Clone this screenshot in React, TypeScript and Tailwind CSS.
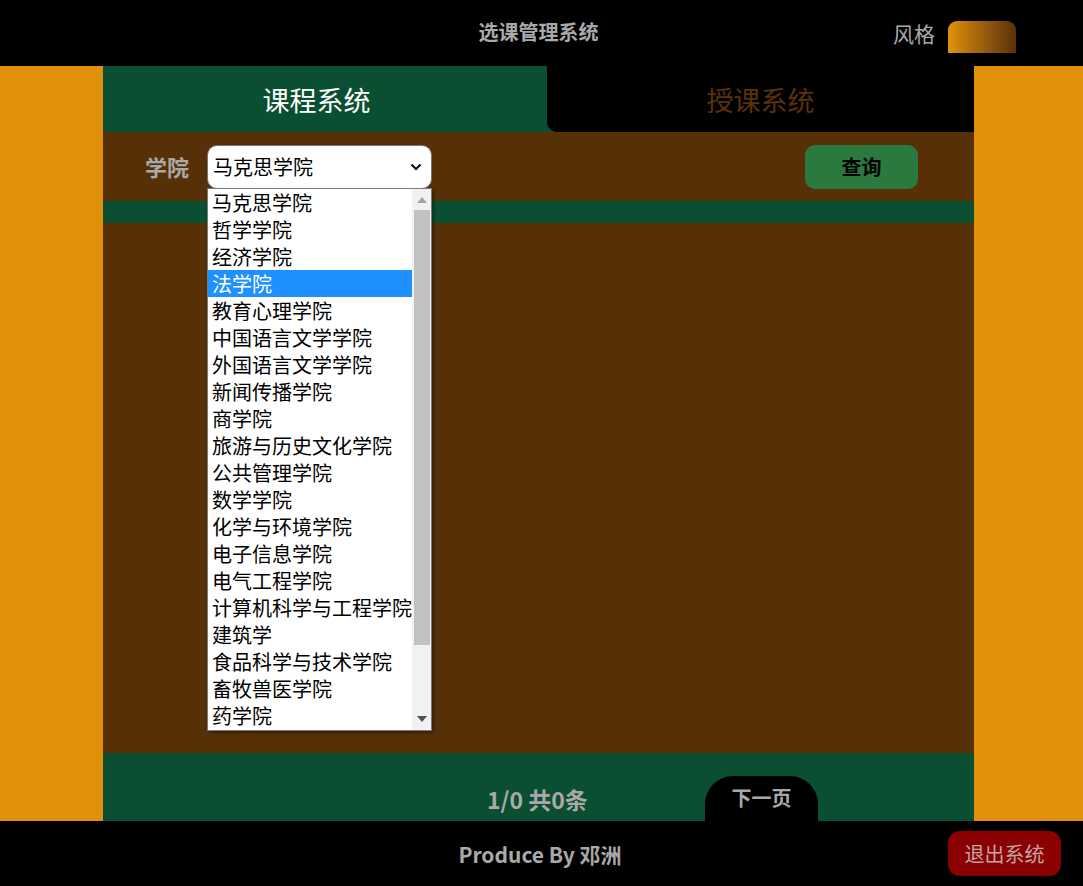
import { useState } from 'react';

const colleges = [
    '马克思学院',
    '哲学学院',
    '经济学院',
    '法学院',
    '教育心理学院',
    '中国语言文学学院',
    '外国语言文学学院',
    '新闻传播学院',
    '商学院',
    '旅游与历史文化学院',
    '公共管理学院',
    '数学学院',
    '化学与环境学院',
    '电子信息学院',
    '电气工程学院',
    '计算机科学与工程学院',
    '建筑学',
    '食品科学与技术学院',
    '畜牧兽医学院',
    '药学院',
];

const font = { fontFamily: '"Noto Sans CJK SC", "Noto Sans", sans-serif' };

export default function App() {
    const [selected] = useState('马克思学院');
    const [hovered] = useState('法学院');

    return (
        <div className="h-[886px] w-full flex flex-col bg-black" style={font}>
            {/* header */}
            <header className="h-[66px] grid grid-cols-[1fr_auto_1fr] items-center bg-black">
                <div />
                <h1 className="text-[20px] font-bold text-[#a9a9a9] -mt-[2px] -ml-[6px]">选课管理系统</h1>
                <div className="flex items-center justify-end pr-[67px] gap-[13px]">
                    <span className="text-[21px] text-[#a9a9a9] mt-[2px]">风格</span>
                    <div className="w-[68px] h-[32px] mt-[8px] rounded-t-[9px] bg-gradient-to-r from-[#e3930a] to-[#5a3208]" />
                </div>
            </header>

            {/* main */}
            <div className="flex-1 flex bg-[#e0900a]">
                <div className="w-[103px]" />
                <div className="w-[871px] flex flex-col">
                    {/* tabs */}
                    <div className="h-[66px] flex justify-between bg-[#0a4f31]">
                        <button className="w-[427px] flex items-center justify-center pt-[3px] text-[27px] text-white">
                            课程系统
                        </button>
                        <button className="w-[427px] flex items-center justify-center pt-[3px] bg-black rounded-bl-[10px] text-[27px] text-[#5a3209]">
                            授课系统
                        </button>
                    </div>

                    {/* filter */}
                    <div className="h-[69px] flex items-center bg-[#583008]">
                        <span className="ml-[42px] w-[62px] text-[22px] font-bold text-[#a9a9a9]">学院</span>
                        <div className="relative">
                            <button className="w-[225px] h-[44px] flex items-center justify-between pl-[5px] pr-[9px] bg-white border border-[#767676] rounded-[10px] text-[20px] text-black">
                                <span>{selected}</span>
                                <svg width="12" height="8" viewBox="0 0 12 8" fill="none">
                                    <path d="M1.5 1.5 6 6l4.5-4.5" stroke="#111" strokeWidth="2.2" />
                                </svg>
                            </button>

                            {/* open list */}
                            <div className="absolute left-0 top-[43px] z-10 w-[225px] h-[543px] flex bg-white border border-[#7a7a7a] shadow-[2px_2px_3px_rgba(0,0,0,0.35)]">
                                <ul className="flex-1">
                                    {colleges.map((c) => (
                                        <li
                                            key={c}
                                            className={
                                                c === hovered
                                                    ? 'h-[27px] leading-[27px] pl-[4px] text-[20px] whitespace-nowrap bg-[#1e90ff] text-white'
                                                    : 'h-[27px] leading-[27px] pl-[4px] text-[20px] whitespace-nowrap text-black'
                                            }
                                        >
                                            {c}
                                        </li>
                                    ))}
                                </ul>
                                <div className="w-[20px] flex flex-col items-center bg-[#f1f1f1]">
                                    <svg className="mt-[8px]" width="10" height="6" viewBox="0 0 10 6">
                                        <path d="M5 0 10 6H0z" fill="#a3a3a3" />
                                    </svg>
                                    <div className="mt-[7px] w-[16px] h-[435px] bg-[#c1c1c1]" />
                                    <div className="flex-1" />
                                    <svg className="mb-[8px]" width="10" height="6" viewBox="0 0 10 6">
                                        <path d="M0 0h10L5 6z" fill="#505050" />
                                    </svg>
                                </div>
                            </div>
                        </div>
                        <button className="ml-[373px] w-[113px] h-[44px] rounded-[10px] bg-[#2a7a3f] text-[20px] font-bold text-black">
                            查询
                        </button>
                    </div>

                    <div className="h-[22px] bg-[#0a4f31]" />

                    {/* results */}
                    <div className="flex-1 bg-[#583008]" />

                    {/* pager */}
                    <div className="h-[68px] flex items-end bg-[#0a4f31]">
                        <span className="ml-[384px] w-[218px] mb-[5px] whitespace-nowrap text-[23px] font-bold text-[#a9a9a9]">1/0 共0条</span>
                        <button className="w-[113px] h-[45px] rounded-t-[28px] bg-black pb-[2px] text-[20px] font-bold text-[#a9a9a9]">
                            下一页
                        </button>
                    </div>
                </div>
                <div className="flex-1" />
            </div>

            {/* footer */}
            <footer className="h-[65px] grid grid-cols-[1fr_auto_1fr] items-center bg-black">
                <div />
                <span className="text-[21px] font-bold text-[#a9a9a9] mt-[2px] -ml-[3px]">Produce By 邓洲</span>
                <div className="flex justify-end pr-[22px]">
                    <button className="w-[113px] h-[45px] rounded-[12px] bg-[#8b0000] text-[20px] text-[#c0a6a6]">
                        退出系统
                    </button>
                </div>
            </footer>
        </div>
    );
}
